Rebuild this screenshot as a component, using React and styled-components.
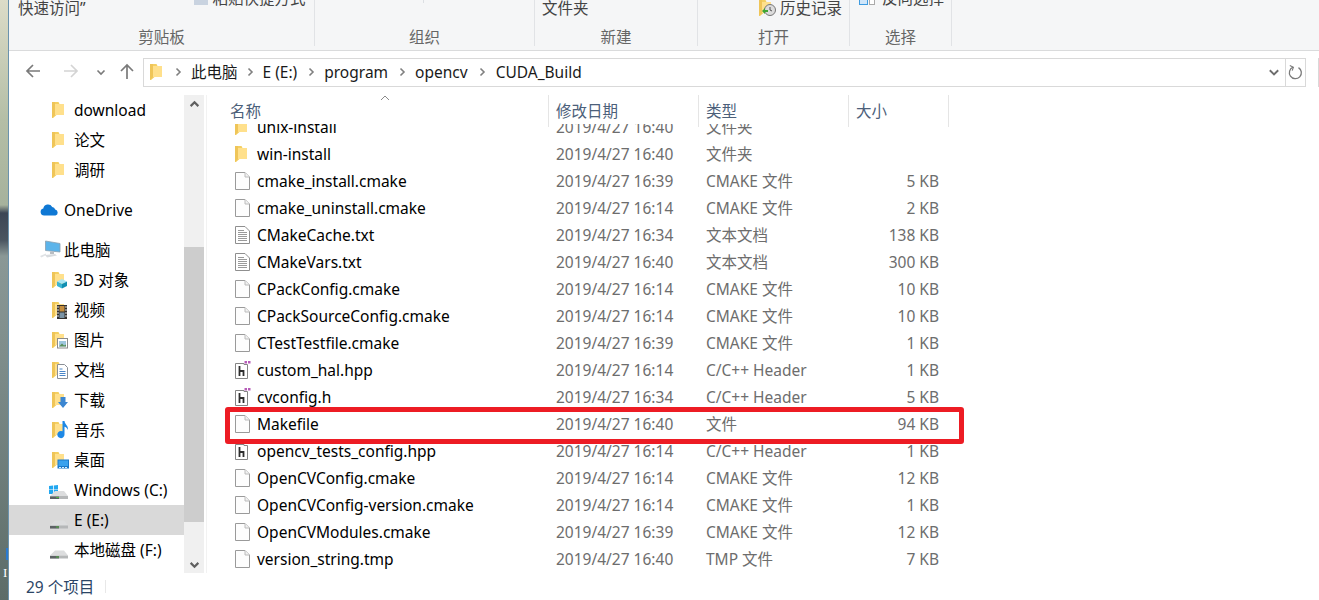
import React from "react";
import styled, { createGlobalStyle } from "styled-components";

const GlobalStyle = createGlobalStyle`
  html, body {
    margin: 0;
    padding: 0;
    background: #fff;
    overflow: hidden;
  }
  body {
    font-family: "Noto Sans", "Noto Sans CJK SC", sans-serif;
    font-size: 15.5px;
    color: #000;
  }
`;

const Page = styled.div`
  display: flex;
  width: 1319px;
  height: 600px;
  overflow: hidden;
`;

const Wallpaper = styled.div`
  position: relative;
  flex: 0 0 8px;
  border-right: 1px solid #6b93ad;
  background: linear-gradient(
    180deg,
    #dcdcc8 0,
    #b4bea6 120px,
    #a6b29c 205px,
    #3c4655 213px,
    #4a5560 240px,
    #8a9896 256px,
    #7f8e8c 350px,
    #5c6c68 600px
  );
`;

const IconPeek = styled.span`
  position: absolute;
  left: 6px;
  top: 548px;
  width: 2px;
  height: 12px;
  background: #2a7ad0;
`;

const LabelPeek = styled.span`
  position: absolute;
  left: 3px;
  top: 565px;
  font: 13px "Liberation Serif", serif;
  color: #fff;
`;

const Window = styled.div`
  flex: 1;
  display: flex;
  flex-direction: column;
  min-width: 0;
`;

const Ribbon = styled.div`
  display: flex;
  flex: 0 0 51px;
  box-sizing: border-box;
  background: #f5f6f7;
  border-bottom: 1px solid #dadbdc;
`;

const RibbonGroup = styled.div`
  display: flex;
  flex-direction: column;
  width: ${(p) => p.$width}px;
  height: 46px;
  border-right: 1px solid #e1e3e6;
  box-sizing: border-box;
`;

const RibbonTools = styled.div`
  display: flex;
  align-items: flex-end;
  height: 27px;
  overflow: hidden;
`;

const RibbonTool = styled.div`
  display: flex;
  align-items: center;
  gap: ${(p) => p.$gap || 3}px;
  flex: none;
  margin-left: ${(p) => p.$left}px;
  margin-bottom: ${(p) => p.$bottom}px;
  color: #444;
  line-height: 20px;
  white-space: nowrap;
`;

const RibbonTick = styled.div`
  flex: none;
  align-self: flex-start;
  width: 1px;
  height: 3px;
  margin-left: 108px;
  background: #dcdfe3;
`;

const RibbonLabel = styled.div`
  flex: 1;
  padding-top: 2px;
  text-align: center;
  line-height: 17px;
  color: #666;
`;

const AddressRow = styled.div`
  display: flex;
  align-items: center;
  flex: 0 0 44px;
  padding-bottom: 2px;
  box-sizing: border-box;
`;

const NavButton = styled.div`
  display: flex;
  justify-content: center;
  align-items: center;
  flex: none;
  width: ${(p) => p.$width}px;
  height: 28px;
`;

const AddressBox = styled.div`
  display: flex;
  align-items: center;
  flex: none;
  width: 1163px;
  height: 29px;
  margin-left: 6px;
  box-sizing: border-box;
  border: 1px solid #d9d9d9;
`;

const Crumbs = styled.div`
  flex: 1;
  display: flex;
  align-items: center;
  padding-left: 6px;
  min-width: 0;
`;

const Crumb = styled.span`
  flex: none;
  line-height: 20px;
  color: #1a1a1a;
  white-space: nowrap;
`;

const CrumbSep = styled.span`
  display: flex;
  justify-content: center;
  flex: none;
  width: ${(p) => p.$width}px;
`;

const DropSlot = styled.div`
  display: flex;
  justify-content: center;
  flex: 0 0 22px;
`;

const RefreshSlot = styled.div`
  display: flex;
  align-items: center;
  justify-content: center;
  flex: 0 0 19px;
  height: 100%;
  border-left: 1px solid #d9d9d9;
`;

const SearchEdge = styled.div`
  flex: none;
  width: 1px;
  height: 29px;
  margin-left: 12px;
  background: #d9d9d9;
`;

const Main = styled.div`
  flex: 1;
  display: flex;
  min-height: 0;
`;

const Sidebar = styled.nav`
  flex: 0 0 175px;
  display: flex;
  flex-direction: column;
  overflow: hidden;
`;

const SideRow = styled.div`
  display: flex;
  align-items: center;
  flex: 0 0 30px;
  box-sizing: border-box;
  margin-top: ${(p) => (p.$gap ? 10 : 0)}px;
  padding-left: ${(p) => p.$indent - 9}px;
  padding-bottom: 1px;
  background: ${(p) => (p.$selected ? "#d9d9d9" : "transparent")};
  color: #000;
  white-space: nowrap;
`;

const SideIcon = styled.span`
  display: flex;
  align-items: center;
  flex: 0 0 ${(p) => p.$slot}px;
`;

const Scrollbar = styled.div`
  flex: none;
  display: flex;
  flex-direction: column;
  width: 20px;
  background: #f0f0f0;
`;

const ScrollButton = styled.div`
  display: flex;
  align-items: center;
  justify-content: center;
  flex: 0 0 ${(p) => p.$size}px;
`;

const ScrollSpace = styled.div`
  flex: 0 0 ${(p) => p.$size}px;
`;

const ScrollThumb = styled.div`
  flex: 0 0 275px;
  background: #cdcdcd;
`;

const ListPane = styled.section`
  position: relative;
  flex: 1;
  display: flex;
  flex-direction: column;
  margin-left: 2px;
  border-left: 1px solid #f2f2f2;
  min-width: 0;
`;

const ListHeader = styled.div`
  position: relative;
  display: flex;
  flex: 0 0 29px;
  height: 29px;
`;

const HeaderCell = styled.div`
  position: relative;
  flex: none;
  width: ${(p) => p.$width}px;
  height: 29px;
  box-sizing: border-box;
  padding: 3px 0 0 ${(p) => p.$pad}px;
  line-height: 26px;
  color: #4c607a;
  &::after {
    content: "";
    position: absolute;
    right: 0;
    top: 0;
    width: 1px;
    height: 32px;
    background: #e5e5e5;
    z-index: 1;
  }
`;

const SortCaret = styled.svg`
  position: absolute;
  left: 173px;
  top: 0;
`;

const ListBody = styled.div`
  flex: 1;
  display: flex;
  flex-direction: column;
  justify-content: flex-end;
  overflow: hidden;
  min-height: 0;
`;

const FileRow = styled.div`
  display: flex;
  align-items: center;
  flex: 0 0 27px;
  box-sizing: border-box;
  padding-bottom: 1px;
`;

const NameCell = styled.div`
  display: flex;
  align-items: center;
  flex: none;
  width: 341px;
  padding-left: 28px;
  box-sizing: border-box;
`;

const NameIcon = styled.span`
  display: flex;
  flex: 0 0 22px;
`;

const NameText = styled.span`
  color: #000;
  line-height: 21px;
  white-space: nowrap;
`;

const InfoCell = styled.div`
  flex: none;
  width: ${(p) => p.$width}px;
  box-sizing: border-box;
  padding: 0 ${(p) => p.$right || 0}px 0 ${(p) => p.$left || 0}px;
  text-align: ${(p) => (p.$end ? "right" : "left")};
  line-height: 21px;
  color: #6d6d6d;
  white-space: nowrap;
`;

const Highlight = styled.div`
  position: absolute;
  left: 18px;
  top: 312px;
  width: 739px;
  height: 37px;
  box-sizing: border-box;
  border: 5px solid #ed1c24;
  border-radius: 3px;
  pointer-events: none;
`;

const StatusBar = styled.footer`
  display: flex;
  align-items: center;
  flex: 0 0 27px;
  padding-left: 17px;
  color: #2b4566;
`;

const StatusText = styled.span`
  flex: 0 0 79px;
`;

const StatusDivider = styled.span`
  width: 1px;
  height: 13px;
  background: #e8e8e8;
`;

const Chevron = ({ dir = "right", color = "#808080", size = 10, width = 1.6 }) => {
  const d = {
    right: "M3.5 1.5 7 5 3.5 8.5",
    down: "M1.5 3.5 5 7 8.5 3.5",
    up: "M1.5 6.5 5 3 8.5 6.5",
  }[dir];
  return (
    <svg width={size} height={size} viewBox="0 0 10 10" fill="none">
      <path d={d} stroke={color} strokeWidth={width} />
    </svg>
  );
};

const Arrow = ({ dir, color }) => {
  const d = {
    left: "M15 8H2M8 2 2 8l6 6",
    right: "M1 8h13M8 2l6 6-6 6",
    up: "M8 16V2M2 8l6-6 6 6",
  }[dir];
  return (
    <svg width="16" height="18" viewBox="0 0 16 18" fill="none">
      <path d={d} stroke={color} strokeWidth="1.7" />
    </svg>
  );
};

const Refresh = () => (
  <svg width="15" height="17" viewBox="0 0 15 17" fill="none">
    <path d="M5 3.2A6 6 0 1 0 10.5 3.6" stroke="#7a7a7a" strokeWidth="1.3" />
    <path d="M1.8 1.5 5.4 3.2 4.2 6.6" stroke="#7a7a7a" strokeWidth="1.1" />
  </svg>
);

const FolderShape = () => (
  <>
    <path d="M0 1h6.500l1 2H12v11H4.500L1 17H0z" fill="#f4cf62" />
    <path d="M3 3h9v11H3z" fill="#ffe08c" />
    <path d="M0 1h3v13l-3 3z" fill="#efc558" />
  </>
);

const Folder = ({ children, w = 20 }) => (
  <svg width={w} height="18" viewBox={`0 0 ${w} 18`}>
    <FolderShape />
    {children}
  </svg>
);

const Cube = () => (
  <Folder>
    <path d="M5 10.500 10 8l5 2.500L10 13z" fill="#a9e6f3" />
    <path d="M5 10.500V15l5 2.500V13z" fill="#3cb4d2" />
    <path d="M15 10.500V15l-5 2.500V13z" fill="#0f8fb2" />
  </Folder>
);

const Film = () => (
  <Folder>
    <rect x="5" y="4" width="10" height="14" fill="#33302e" />
    <rect x="7.500" y="5" width="5" height="5.500" fill="#c58d3e" />
    <rect x="7.500" y="11.500" width="5" height="5.500" fill="#7b94a6" />
    <path d="M5.500 5h1v2h-1zm0 3h1v2h-1zm0 3h1v2h-1zm0 3h1v2h-1zm8-9h1v2h-1zm0 3h1v2h-1zm0 3h1v2h-1zm0 3h1v2h-1z" fill="#ddd" />
  </Folder>
);

const Picture = () => (
  <Folder>
    <rect x="5.500" y="7.500" width="10" height="9.500" fill="#fff" stroke="#8a8a8a" />
    <path d="M7 10h7v5.500H7z" fill="#9ec6de" />
    <path d="M7 15.500l3-3 2 2 2-1v2z" fill="#5a8f5a" />
  </Folder>
);

const Doc = () => (
  <Folder>
    <path d="M5.500 3.500h7l3 3v11h-10z" fill="#fff" stroke="#8a8f96" />
    <path d="M7.500 8h3M7.500 10.500h6M7.500 12.500h6M7.500 14.500h6" stroke="#4a86c8" strokeWidth="1" />
  </Folder>
);

const Download = () => (
  <Folder>
    <path d="M8.500 6h5v5h2.500L11 17l-5-6h2.500z" fill="#3b86d1" />
  </Folder>
);

const Music = () => (
  <Folder>
    <path d="M10.500 0h2c.3 3.500 4 4.500 3.500 9-.7-2-2.200-3-3.500-3.300V13.500a3.600 3.600 0 1 1-2-3.200z" fill="#1e88e5" />
  </Folder>
);

const Desktop = () => (
  <Folder>
    <rect x="5.500" y="8.500" width="11.500" height="9" fill="#1a79c9" />
    <rect x="6.500" y="9.500" width="9.500" height="5.500" fill="#3aa2ee" />
    <path d="M7 16h2v1H7zm3 0h2v1h-2zm3 0h2v1h-2z" fill="#d9eefc" />
  </Folder>
);

const Cloud = () => (
  <svg width="19" height="13" viewBox="0 0 19 13">
    <path
      d="M4.200 12.500A3.500 3.500 0 0 1 3.300 5.600 4.800 4.800 0 0 1 12.200 3.900 3.900 3.900 0 0 1 15.200 6.500 3.100 3.100 0 0 1 15.500 12.500z"
      fill="#0f78d4"
    />
  </svg>
);

const Computer = () => (
  <svg width="22" height="20" viewBox="0 0 22 20">
    <path d="M5.500 1 20 3.500V12L5.500 10.500z" fill="#5cb4ea" stroke="#8aa0b0" strokeWidth=".8" />
    <path d="M10 11.500h4v2.500h-4z" fill="#b8bdc2" />
    <path d="M5 15 15 14l2 1.500-10 2z" fill="#d8dbde" />
    <path d="M0 16 6 13.500V15L1.500 17.500z" fill="#dfe2e5" />
  </svg>
);

const DriveShape = () => (
  <>
    <path d="M0 9.500 5 4.500h9l4 5z" fill="#dcddde" />
    <path d="M0 9.500h18v3H0z" fill="#b5b7b8" />
    <path d="M0 10h9v2.500H0z" fill="#5d6265" />
    <path d="M6 10.500h3v1H6z" fill="#52b045" />
  </>
);

const Drive = () => (
  <svg width="18" height="18" viewBox="0 -5 18 18">
    <DriveShape />
  </svg>
);

const SystemDrive = () => (
  <svg width="20" height="22" viewBox="0 0 20 22">
    <path d="M0 7 4 6.500v4H0zm4.800-.600L9 6v4.500H4.800zM0 11h4v4H0zm4.800 0H9v4.500L4.800 15z" fill="#22a7f0" />
    <g transform="translate(1 7.500)">
      <DriveShape />
    </g>
  </svg>
);

const PlainFile = () => (
  <svg width="15" height="18" viewBox="0 0 15 18">
    <path d="M.500.500h9.500l4.500 4.500v12.500H.500z" fill="#fdfdfd" stroke="#9a9a9a" />
    <path d="M10 .500V5h4.500" fill="#f1f1f1" stroke="#bcbcbc" />
  </svg>
);

const TextFile = () => (
  <svg width="15" height="18" viewBox="0 0 15 18">
    <path d="M.500.500h9.500l4.500 4.500v12.500H.500z" fill="#fff" stroke="#8f8f8f" />
    <path d="M3 4.500h6M3 6.500h9M3 8.500h9M3 10.500h9M3 12.500h9M3 14.500h9" stroke="#9a9a9a" />
  </svg>
);

const HeaderFile = ({ dots = true }) => (
  <svg width="16" height="18" viewBox="0 0 16 18">
    <path d="M.500 2.500h8.500v1h3.500v14H.500z" fill="#fff" stroke="#858585" />
    <path d="M4.500 5v10M4.500 10H8.500v5" fill="none" stroke="#2e2e2e" strokeWidth="1.800" />
    {dots && <path d="M9.500 0h2.500v2.500H9.500zm3.500 0h2.500v2.500H13z" fill="#b65cb8" />}
  </svg>
);

const ROW_ICONS = {
  folder: <Folder w={15} />,
  file: <PlainFile />,
  text: <TextFile />,
  cpp: <HeaderFile />,
  hpp: <HeaderFile dots={false} />,
};

const CMAKE = "CMAKE 文件";
const HEADER = "C/C++ Header";

const FILES = [
  ["folder", "unix-install", "2019/4/27 16:40", "文件夹", ""],
  ["folder", "win-install", "2019/4/27 16:40", "文件夹", ""],
  ["file", "cmake_install.cmake", "2019/4/27 16:39", CMAKE, "5 KB"],
  ["file", "cmake_uninstall.cmake", "2019/4/27 16:14", CMAKE, "2 KB"],
  ["text", "CMakeCache.txt", "2019/4/27 16:34", "文本文档", "138 KB"],
  ["text", "CMakeVars.txt", "2019/4/27 16:40", "文本文档", "300 KB"],
  ["file", "CPackConfig.cmake", "2019/4/27 16:14", CMAKE, "10 KB"],
  ["file", "CPackSourceConfig.cmake", "2019/4/27 16:14", CMAKE, "10 KB"],
  ["file", "CTestTestfile.cmake", "2019/4/27 16:39", CMAKE, "1 KB"],
  ["cpp", "custom_hal.hpp", "2019/4/27 16:14", HEADER, "1 KB"],
  ["cpp", "cvconfig.h", "2019/4/27 16:34", HEADER, "5 KB"],
  ["file", "Makefile", "2019/4/27 16:40", "文件", "94 KB"],
  ["hpp", "opencv_tests_config.hpp", "2019/4/27 16:14", HEADER, "1 KB"],
  ["file", "OpenCVConfig.cmake", "2019/4/27 16:14", CMAKE, "12 KB"],
  ["file", "OpenCVConfig-version.cmake", "2019/4/27 16:14", CMAKE, "1 KB"],
  ["file", "OpenCVModules.cmake", "2019/4/27 16:39", CMAKE, "12 KB"],
  ["file", "version_string.tmp", "2019/4/27 16:40", "TMP 文件", "7 KB"],
];

const SIDE_ITEMS = [
  { label: "download", icon: <Folder /> },
  { label: "论文", icon: <Folder /> },
  { label: "调研", icon: <Folder /> },
  { label: "OneDrive", icon: <Cloud />, indent: 40, slot: 24, gap: true },
  { label: "此电脑", icon: <Computer />, indent: 40, slot: 24, gap: true },
  { label: "3D 对象", icon: <Cube /> },
  { label: "视频", icon: <Film /> },
  { label: "图片", icon: <Picture /> },
  { label: "文档", icon: <Doc /> },
  { label: "下载", icon: <Download /> },
  { label: "音乐", icon: <Music /> },
  { label: "桌面", icon: <Desktop /> },
  { label: "Windows (C:)", icon: <SystemDrive />, indent: 49, slot: 25 },
  { label: "E (E:)", icon: <Drive />, indent: 50, slot: 24, selected: true },
  { label: "本地磁盘 (F:)", icon: <Drive />, indent: 50, slot: 24 },
];

const CRUMBS = [
  ["此电脑", 25],
  ["E (E:)", 27],
  ["program", 27],
  ["opencv", 28],
  ["CUDA_Build", 0],
];

const HistoryIcon = () => (
  <svg width="18" height="18" viewBox="0 0 18 18">
    <FolderShape />
    <circle cx="11" cy="11" r="5.500" fill="#dcdcdc" stroke="#777" />
    <path d="M11 8v3l2 1" fill="none" stroke="#555" />
    <path d="M3 12l3-3v2h3v2H6v2z" fill="#3fa535" />
  </svg>
);

const App = () => (
  <Page>
    <GlobalStyle />
    <Wallpaper>
      <IconPeek />
      <LabelPeek>I</LabelPeek>
    </Wallpaper>
    <Window>
      <Ribbon>
        <RibbonGroup $width={306}>
          <RibbonTools>
            <RibbonTool $left={9} $bottom={9}>快速访问”</RibbonTool>
            <RibbonTool $left={108} $bottom={19} $gap={5}>
              <svg width="14" height="14" viewBox="0 0 14 14">
                <rect width="14" height="14" fill="#c9d3e0" />
              </svg>
              粘贴快捷方式
            </RibbonTool>
          </RibbonTools>
          <RibbonLabel>剪贴板</RibbonLabel>
        </RibbonGroup>
        <RibbonGroup $width={220}>
          <RibbonTools>
            <RibbonTick />
          </RibbonTools>
          <RibbonLabel>组织</RibbonLabel>
        </RibbonGroup>
        <RibbonGroup $width={163}>
          <RibbonTools>
            <RibbonTool $left={7} $bottom={9}>文件夹</RibbonTool>
          </RibbonTools>
          <RibbonLabel>新建</RibbonLabel>
        </RibbonGroup>
        <RibbonGroup $width={152}>
          <RibbonTools>
            <RibbonTool $left={61} $bottom={9}>
              <HistoryIcon />
              历史记录
            </RibbonTool>
          </RibbonTools>
          <RibbonLabel>打开</RibbonLabel>
        </RibbonGroup>
        <RibbonGroup $width={102}>
          <RibbonTools>
            <RibbonTool $left={9} $bottom={19} $gap={6}>
              <svg width="17" height="14" viewBox="0 0 17 14">
                <rect x=".5" y=".5" width="8" height="13" fill="#cfe6fa" stroke="#3f9be0" />
                <rect x="10.500" y="6.500" width="5" height="7" fill="#fff" stroke="#aaa" />
              </svg>
              反向选择
            </RibbonTool>
          </RibbonTools>
          <RibbonLabel>选择</RibbonLabel>
        </RibbonGroup>
      </Ribbon>

      <AddressRow>
        <NavButton $width={48}><Arrow dir="left" color="#7a7a7a" /></NavButton>
        <NavButton $width={28}><Arrow dir="right" color="#d4d4d4" /></NavButton>
        <NavButton $width={32}><Chevron dir="down" color="#7a7a7a" /></NavButton>
        <NavButton $width={20}><Arrow dir="up" color="#7a7a7a" /></NavButton>
        <AddressBox>
          <Crumbs>
            <Folder w={15} />
            <CrumbSep $width={26}><Chevron /></CrumbSep>
            {CRUMBS.map(([label, sep]) => (
              <React.Fragment key={label}>
                <Crumb>{label}</Crumb>
                {sep > 0 && <CrumbSep $width={sep}><Chevron /></CrumbSep>}
              </React.Fragment>
            ))}
          </Crumbs>
          <DropSlot><Chevron dir="down" color="#6d6d6d" size={12} /></DropSlot>
          <RefreshSlot><Refresh /></RefreshSlot>
        </AddressBox>
        <SearchEdge />
      </AddressRow>

      <Main>
        <Sidebar>
          {SIDE_ITEMS.map((item) => (
            <SideRow
              key={item.label}
              $indent={item.indent || 52}
              $gap={item.gap}
              $selected={item.selected}
            >
              <SideIcon $slot={item.slot || 22}>{item.icon}</SideIcon>
              {item.label}
            </SideRow>
          ))}
        </Sidebar>

        <Scrollbar>
          <ScrollButton $size={18}><Chevron dir="up" color="#606060" size={11} width={2} /></ScrollButton>
          <ScrollSpace $size={134} />
          <ScrollThumb />
          <ScrollSpace $size={34} />
          <ScrollButton $size={17}><Chevron dir="down" color="#606060" size={11} width={2} /></ScrollButton>
        </Scrollbar>

        <ListPane>
          <ListHeader>
            <HeaderCell $width={342} $pad={23}>名称</HeaderCell>
            <HeaderCell $width={150} $pad={7}>修改日期</HeaderCell>
            <HeaderCell $width={150} $pad={7}>类型</HeaderCell>
            <HeaderCell $width={100} $pad={7}>大小</HeaderCell>
            <SortCaret width="10" height="6" viewBox="0 0 10 6" fill="none">
              <path d="M1 5 5 1l4 4" stroke="#8a8a8a" />
            </SortCaret>
          </ListHeader>
          <ListBody>
            {FILES.map(([type, name, date, kind, size]) => (
              <FileRow key={name}>
                <NameCell>
                  <NameIcon>{ROW_ICONS[type]}</NameIcon>
                  <NameText>{name}</NameText>
                </NameCell>
                <InfoCell $width={150} $left={8}>{date}</InfoCell>
                <InfoCell $width={150} $left={8}>{kind}</InfoCell>
                <InfoCell $width={100} $right={9} $end>{size}</InfoCell>
              </FileRow>
            ))}
          </ListBody>
          <Highlight />
        </ListPane>
      </Main>

      <StatusBar>
        <StatusText>29 个项目</StatusText>
        <StatusDivider />
      </StatusBar>
    </Window>
  </Page>
);

export default App;
